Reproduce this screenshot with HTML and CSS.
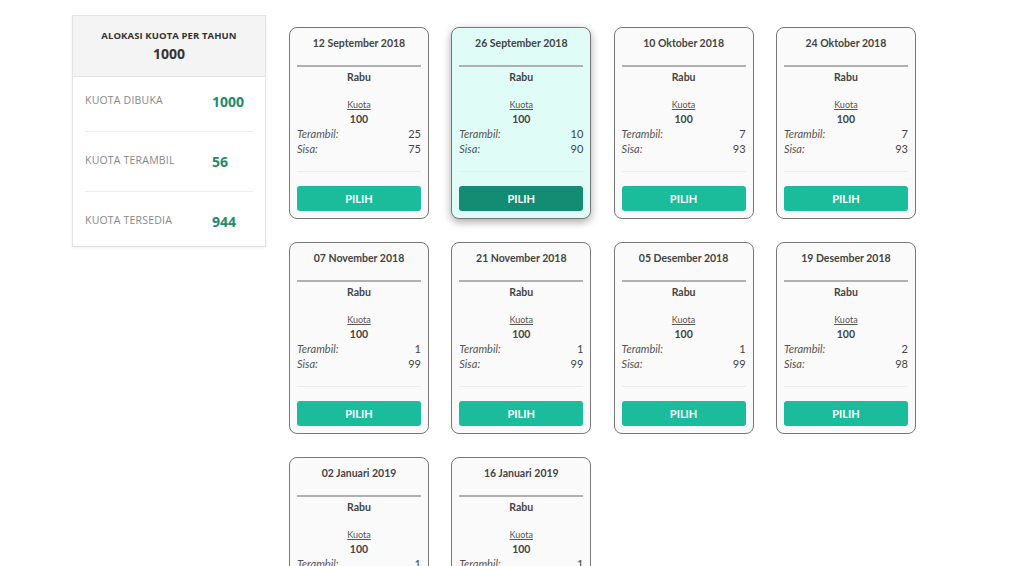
FILE: index.html
```html
<!DOCTYPE html>
<html lang="id">
<head>
  <meta charset="UTF-8">
  <meta name="viewport" content="width=device-width, initial-scale=1.0">
  <title>Pilih Jadwal</title>
  <link rel="stylesheet" href="styles.css">
</head>
<body>
  <div class="page">
    <aside class="quota-panel">
      <div class="quota-head">
        <div class="quota-title">ALOKASI KUOTA PER TAHUN</div>
        <div class="quota-total">1000</div>
      </div>
      <div class="quota-list">
        <div class="stat">
          <span class="stat-label">KUOTA DIBUKA</span>
          <span class="stat-value">1000</span>
        </div>
        <div class="stat">
          <span class="stat-label">KUOTA TERAMBIL</span>
          <span class="stat-value">56</span>
        </div>
        <div class="stat">
          <span class="stat-label">KUOTA TERSEDIA</span>
          <span class="stat-value">944</span>
        </div>
      </div>
    </aside>

    <main class="schedule">
      <div class="slot">
        <div class="slot-date">12 September 2018</div>
        <hr class="slot-rule">
        <div class="slot-day">Rabu</div>
        <div class="slot-caption">Kuota</div>
        <div class="slot-quota">100</div>
        <div class="slot-row"><em>Terambil:</em><span>25</span></div>
        <div class="slot-row"><em>Sisa:</em><span>75</span></div>
        <hr class="slot-sep">
        <button class="slot-btn">PILIH</button>
      </div>

      <div class="slot active">
        <div class="slot-date">26 September 2018</div>
        <hr class="slot-rule">
        <div class="slot-day">Rabu</div>
        <div class="slot-caption">Kuota</div>
        <div class="slot-quota">100</div>
        <div class="slot-row"><em>Terambil:</em><span>10</span></div>
        <div class="slot-row"><em>Sisa:</em><span>90</span></div>
        <hr class="slot-sep">
        <button class="slot-btn">PILIH</button>
      </div>

      <div class="slot">
        <div class="slot-date">10 Oktober 2018</div>
        <hr class="slot-rule">
        <div class="slot-day">Rabu</div>
        <div class="slot-caption">Kuota</div>
        <div class="slot-quota">100</div>
        <div class="slot-row"><em>Terambil:</em><span>7</span></div>
        <div class="slot-row"><em>Sisa:</em><span>93</span></div>
        <hr class="slot-sep">
        <button class="slot-btn">PILIH</button>
      </div>

      <div class="slot">
        <div class="slot-date">24 Oktober 2018</div>
        <hr class="slot-rule">
        <div class="slot-day">Rabu</div>
        <div class="slot-caption">Kuota</div>
        <div class="slot-quota">100</div>
        <div class="slot-row"><em>Terambil:</em><span>7</span></div>
        <div class="slot-row"><em>Sisa:</em><span>93</span></div>
        <hr class="slot-sep">
        <button class="slot-btn">PILIH</button>
      </div>

      <div class="slot">
        <div class="slot-date">07 November 2018</div>
        <hr class="slot-rule">
        <div class="slot-day">Rabu</div>
        <div class="slot-caption">Kuota</div>
        <div class="slot-quota">100</div>
        <div class="slot-row"><em>Terambil:</em><span>1</span></div>
        <div class="slot-row"><em>Sisa:</em><span>99</span></div>
        <hr class="slot-sep">
        <button class="slot-btn">PILIH</button>
      </div>

      <div class="slot">
        <div class="slot-date">21 November 2018</div>
        <hr class="slot-rule">
        <div class="slot-day">Rabu</div>
        <div class="slot-caption">Kuota</div>
        <div class="slot-quota">100</div>
        <div class="slot-row"><em>Terambil:</em><span>1</span></div>
        <div class="slot-row"><em>Sisa:</em><span>99</span></div>
        <hr class="slot-sep">
        <button class="slot-btn">PILIH</button>
      </div>

      <div class="slot">
        <div class="slot-date">05 Desember 2018</div>
        <hr class="slot-rule">
        <div class="slot-day">Rabu</div>
        <div class="slot-caption">Kuota</div>
        <div class="slot-quota">100</div>
        <div class="slot-row"><em>Terambil:</em><span>1</span></div>
        <div class="slot-row"><em>Sisa:</em><span>99</span></div>
        <hr class="slot-sep">
        <button class="slot-btn">PILIH</button>
      </div>

      <div class="slot">
        <div class="slot-date">19 Desember 2018</div>
        <hr class="slot-rule">
        <div class="slot-day">Rabu</div>
        <div class="slot-caption">Kuota</div>
        <div class="slot-quota">100</div>
        <div class="slot-row"><em>Terambil:</em><span>2</span></div>
        <div class="slot-row"><em>Sisa:</em><span>98</span></div>
        <hr class="slot-sep">
        <button class="slot-btn">PILIH</button>
      </div>

      <div class="slot">
        <div class="slot-date">02 Januari 2019</div>
        <hr class="slot-rule">
        <div class="slot-day">Rabu</div>
        <div class="slot-caption">Kuota</div>
        <div class="slot-quota">100</div>
        <div class="slot-row"><em>Terambil:</em><span>1</span></div>
        <div class="slot-row"><em>Sisa:</em><span>99</span></div>
        <hr class="slot-sep">
        <button class="slot-btn">PILIH</button>
      </div>

      <div class="slot">
        <div class="slot-date">16 Januari 2019</div>
        <hr class="slot-rule">
        <div class="slot-day">Rabu</div>
        <div class="slot-caption">Kuota</div>
        <div class="slot-quota">100</div>
        <div class="slot-row"><em>Terambil:</em><span>1</span></div>
        <div class="slot-row"><em>Sisa:</em><span>99</span></div>
        <hr class="slot-sep">
        <button class="slot-btn">PILIH</button>
      </div>
    </main>
  </div>
</body>
</html>
```

FILE: styles.css
```css
body {
  margin: 0;
  padding: 0;
  background-color: #fff;
  color: #333;
  font-family: 'Lato', 'Open Sans', sans-serif;
}

.page {
  display: flex;
  align-items: flex-start;
  padding: 15px 0 0 72px;
}

/* Quota summary */
.quota-panel {
  width: 194px;
  box-sizing: border-box;
  border: 1px solid #e3e3e3;
  box-shadow: 0 1px 3px rgba(0, 0, 0, 0.06);
  font-family: 'Open Sans', sans-serif;
  background-color: #fff;
}

.quota-head {
  background-color: #f4f4f4;
  border-bottom: 1px solid #e3e3e3;
  padding: 14px 0 13px;
  text-align: center;
}

.quota-title {
  font-size: 9.5px;
  line-height: 12px;
  font-weight: 700;
  color: #333;
  letter-spacing: 0.1px;
}

.quota-total {
  margin-top: 3px;
  font-size: 14px;
  line-height: 18px;
  font-weight: 700;
  color: #333;
}

.quota-list {
  padding: 0 12px;
}

.stat {
  display: flex;
  align-items: center;
  padding: 20px 0;
  border-bottom: 1px solid #eee;
}

.stat:first-child {
  padding-top: 15px;
}

.stat:last-child {
  padding-bottom: 15px;
  border-bottom: none;
}

.stat-label {
  width: 127px;
  font-size: 10.5px;
  line-height: 19px;
  color: #888;
  letter-spacing: 0.2px;
  margin-top: -2px;
}

.stat-value {
  font-size: 14px;
  line-height: 19px;
  font-weight: 700;
  color: #1e8a6f;
}

/* Schedule cards */
.schedule {
  margin-left: 23px;
  margin-top: 12px;
  display: grid;
  grid-template-columns: repeat(4, 140px);
  column-gap: 22.3px;
  row-gap: 23px;
}

.slot {
  box-sizing: border-box;
  height: 192px;
  border: 1px solid #777;
  border-radius: 8px;
  padding: 8px 7px 7px;
  background-color: #fafafa;
  text-align: center;
}

.slot.active {
  background-color: #dffcf6;
  box-shadow: 0 3px 8px rgba(0, 0, 0, 0.35);
}

.slot-date,
.slot-day,
.slot-quota {
  font-size: 10.5px;
  line-height: 14px;
  font-weight: 700;
  color: #444;
}

.slot-rule {
  margin: 15px 0 0;
  border: none;
  border-top: 2px solid #b0b0b0;
}

.slot-day {
  margin-top: 3px;
}

.slot-caption {
  margin-top: 15px;
  font-size: 9px;
  line-height: 12px;
  color: #555;
  text-decoration: underline;
}

.slot-quota {
  margin-top: 1px;
}

.slot-row {
  display: flex;
  justify-content: space-between;
  font-size: 11px;
  line-height: 15px;
  color: #444;
}

.slot-row em {
  font-style: italic;
  color: #555;
}

.slot-sep {
  margin: 15px 0 0;
  border: none;
  border-top: 1px solid #ececec;
}

.slot-btn {
  display: block;
  width: 100%;
  height: 25px;
  margin-top: 14px;
  border: none;
  border-radius: 3px;
  background-color: #1abc9c;
  color: #fff;
  font-family: 'Lato', sans-serif;
  font-size: 11px;
  font-weight: 700;
  cursor: pointer;
}

.slot.active .slot-btn {
  background-color: #148c73;
}
```
